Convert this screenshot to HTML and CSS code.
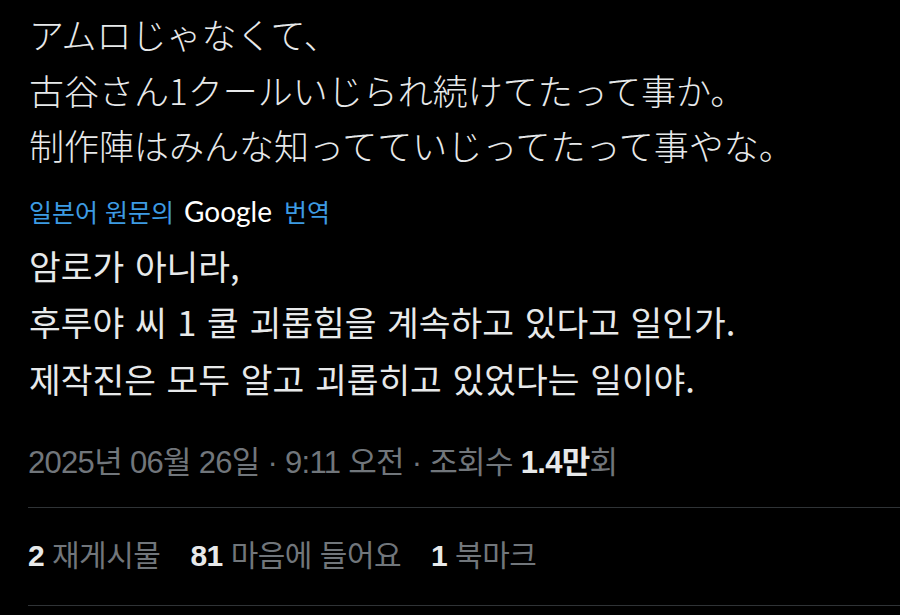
FILE: index.html
```html
<!DOCTYPE html>
<html lang="ko">
<head>
<meta charset="utf-8">
<link rel="stylesheet" href="styles.css">
</head>
<body>
<main class="tweet">
  <div class="original" lang="ja">
    <p>アムロじゃなくて、</p>
    <p>古谷さん1クールいじられ続けてたって事か。</p>
    <p>制作陣はみんな知ってていじってたって事やな。</p>
  </div>
  <div class="translate-link">
    <span class="blue">일본어 원문의</span>
    <span class="google">Google</span>
    <span class="blue">번역</span>
  </div>
  <div class="translated">
    <p>암로가 아니라,</p>
    <p>후루야 씨 1 쿨 괴롭힘을 계속하고 있다고 일인가.</p>
    <p>제작진은 모두 알고 괴롭히고 있었다는 일이야.</p>
  </div>
  <div class="meta">2025년 06월 26일 · 9:11 오전 · 조회수 <b>1.4만</b>회</div>
  <div class="stats">
    <span class="stat"><b>2</b> 재게시물</span>
    <span class="stat"><b>81</b> 마음에 들어요</span>
    <span class="stat"><b>1</b> 북마크</span>
  </div>
</main>
</body>
</html>
```

FILE: styles.css
```css
html, body {
  margin: 0;
  padding: 0;
  background: #000;
}
body {
  width: 900px;
  height: 615px;
  overflow: hidden;
}
.tweet {
  padding: 6px 0 0 28px;
  color: #e7e9ea;
  font-family: "Liberation Sans", "Noto Sans CJK KR", sans-serif;
}
.original p, .translated p {
  margin: 0;
}
.original {
  font-family: "Noto Sans CJK JP", sans-serif;
  font-size: 35px;
  line-height: 55.5px;
  font-weight: 300;
  padding-left: 1px;
}
.translate-link {
  margin-top: 20px;
  padding-left: 1px;
  font-size: 25px;
  line-height: 36px;
  font-family: "Noto Sans CJK KR", sans-serif;
  display: flex;
  align-items: baseline;
}
.blue {
  color: #3d9be3;
}
.google {
  font-family: "Lato", "Roboto", sans-serif;
  font-weight: 400;
  font-size: 28px;
  color: #fff;
  margin: 0 12px 0 10px;
}
.translated {
  margin-top: 8px;
  padding-left: 1px;
  font-family: "Noto Sans CJK KR", sans-serif;
  font-size: 34.5px;
  line-height: 56.5px;
  font-weight: 400;
  word-spacing: 1px;
}
.meta {
  margin-top: 37px;
  color: #71767b;
  font-size: 31px;
  line-height: 40px;
  height: 64px;
  border-bottom: 1px solid #2f3336;
  letter-spacing: -0.7px;
}
.meta b {
  color: #e7e9ea;
  font-weight: 700;
}
.stats {
  display: flex;
  gap: 30px;
  height: 89px;
  padding-bottom: 8px;
  align-items: center;
  border-bottom: 1px solid #2f3336;
  color: #71767b;
  font-size: 30px;
  letter-spacing: -0.5px;
}
.stats b {
  color: #e7e9ea;
  font-weight: 700;
}
```
